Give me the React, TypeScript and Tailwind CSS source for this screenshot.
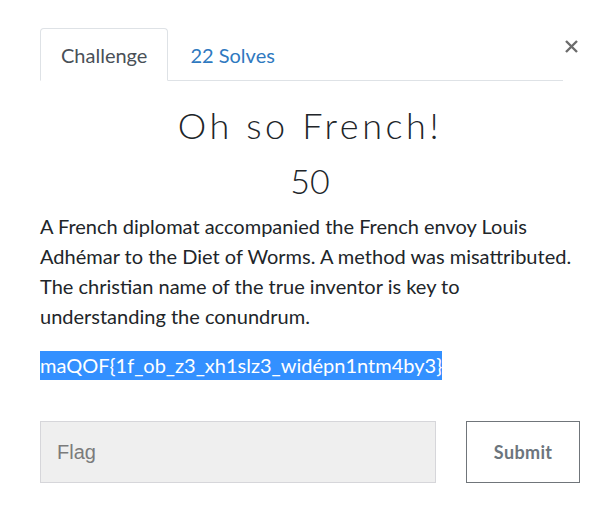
export default function App() {
  return (
    <div className="min-h-[527px] w-[602px] bg-white font-['Lato',sans-serif] text-[#212529]">
      <div className="pl-[40px] pr-[22px] pt-[28px]">
        <div className="flex items-start">
          <nav className="flex flex-1 border-b border-[#dee2e6]">
            <button className="-mb-px rounded-t-[4px] border border-[#dee2e6] border-b-white bg-white px-[20px] pt-[14px] pb-[13px] text-[20px] leading-[24px] text-[#495057]">
              Challenge
            </button>
            <button className="px-[22px] pt-[14px] pb-[13px] text-[20px] leading-[24px] text-[#2f79c0]">
              22 Solves
            </button>
          </nav>
          <button className="mt-[8px] flex h-[20px] w-[17px] items-center justify-center text-[#6c6c6c]" aria-label="Close">
            <svg width="13" height="13" viewBox="0 0 13 13" fill="none" stroke="currentColor" strokeWidth="2.4">
              <path d="M1 1L12 12M12 1L1 12" />
            </svg>
          </button>
        </div>

        <h2 className="mt-[22px] text-center text-[36px] font-light leading-[44px] tracking-[0.1em] text-[#212529]">
          Oh so French!
        </h2>
        <h3 className="mt-[12px] text-center text-[34px] font-light leading-[44px] text-[#212529]">50</h3>

        <p className="mt-[8px] text-[20px] leading-[30px] text-[#212529]">
          A French diplomat accompanied the French envoy Louis Adhémar to the Diet of Worms. A method was misattributed. The christian name of the true inventor is key to understanding the conundrum.
        </p>
        <p className="mt-[20px] text-[20px] leading-[29px]">
          <span className="inline-block bg-[#3390ff] leading-[29px] text-white">maQOF{'{'}1f_ob_z3_xh1slz3_widépn1ntm4by3{'}'}</span>
        </p>

        <form className="mt-[41px] flex gap-[30px]" onSubmit={(e) => e.preventDefault()}>
          <input
            type="text"
            placeholder="Flag"
            className="h-[62px] w-[397px] border border-[#d6d6da] bg-[#efefef] px-[16px] font-['Liberation_Sans',Arial,sans-serif] text-[20px] text-[#555] outline-none placeholder:text-[#7b7b7b]"
          />
          <button className="h-[62px] w-[114px] border border-[#70757a] bg-white text-[18px] font-bold tracking-[0.02em] text-[#6c757d]">
            Submit
          </button>
        </form>
      </div>
    </div>
  )
}
